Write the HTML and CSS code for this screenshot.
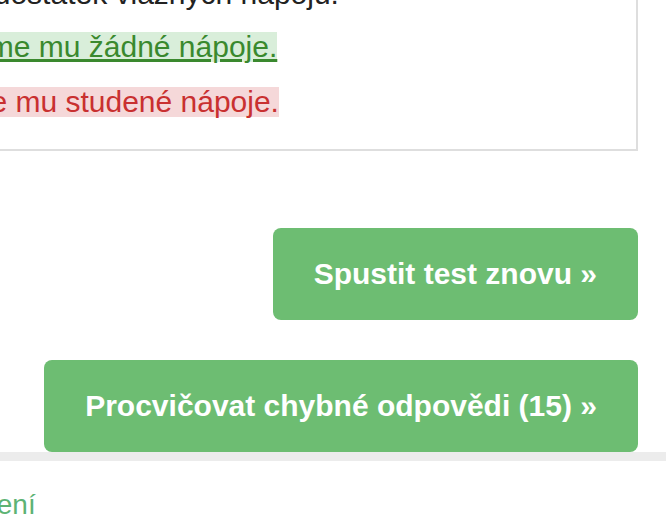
FILE: index.html
```html
<!DOCTYPE html>
<html lang="cs">
<head>
    <meta charset="UTF-8">
    <title>Výsledek testu</title>
    <link rel="stylesheet" href="styles.css">
</head>
<body>
<div class="card">
    <p class="question">Nemocný má horečku. Pro jeho zotavení<br>je důležitý dostatek vlažných nápojů.</p>
    <p><span class="answer correct">Nepodáváme mu žádné nápoje.</span></p>
    <p><span class="answer wrong">Nabídneme mu studené nápoje.</span></p>
</div>

<div class="actions">
    <a class="btn" href="#">Spustit test znovu &raquo;</a>
    <a class="btn" href="#">Procvičovat chybné odpovědi (15) &raquo;</a>
</div>

<div class="more">
    <a href="#">Další cvičení</a>
</div>
</body>
</html>
```

FILE: styles.css
```css
body{ margin: 0; font-family: "Liberation Sans", Arial, sans-serif; background: #fff; overflow: hidden;}

/* karta s otázkou, levá část je mimo výřez */
.card{ margin: -73px 28px 0 -174px; padding: 20px 24px 32px; border: 2px solid #dedede; background: #fff;}
.card p{ margin: 0 0 25px; font-size: 30px; line-height: 30px; color: #222; white-space: nowrap;}
.card .question{ margin-bottom: 23px;}
.card p:last-child{ margin-bottom: 0;}
.answer{ display: inline-block;}
.answer.correct{ color: #3a892e; background: #d9eeda; text-decoration: underline;}
.answer.wrong{ color: #c93030; background: #f5d8d9;}

.actions{ display: flex; flex-direction: column; align-items: flex-end; gap: 40px; margin: 77px 28px 0 0;}
.btn{ display: block; padding: 29px 41px; font-size: 30px; line-height: 34px; font-weight: bold; color: #fff; background: #6dbd72; border-radius: 8px; text-decoration: none;}

.more{ border-top: 9px solid #ececec; padding-top: 28px;}
.more a{ display: block; margin-left: -123px; font-size: 28px; line-height: 32px; color: #5db374; text-decoration: none; white-space: nowrap;}
```
